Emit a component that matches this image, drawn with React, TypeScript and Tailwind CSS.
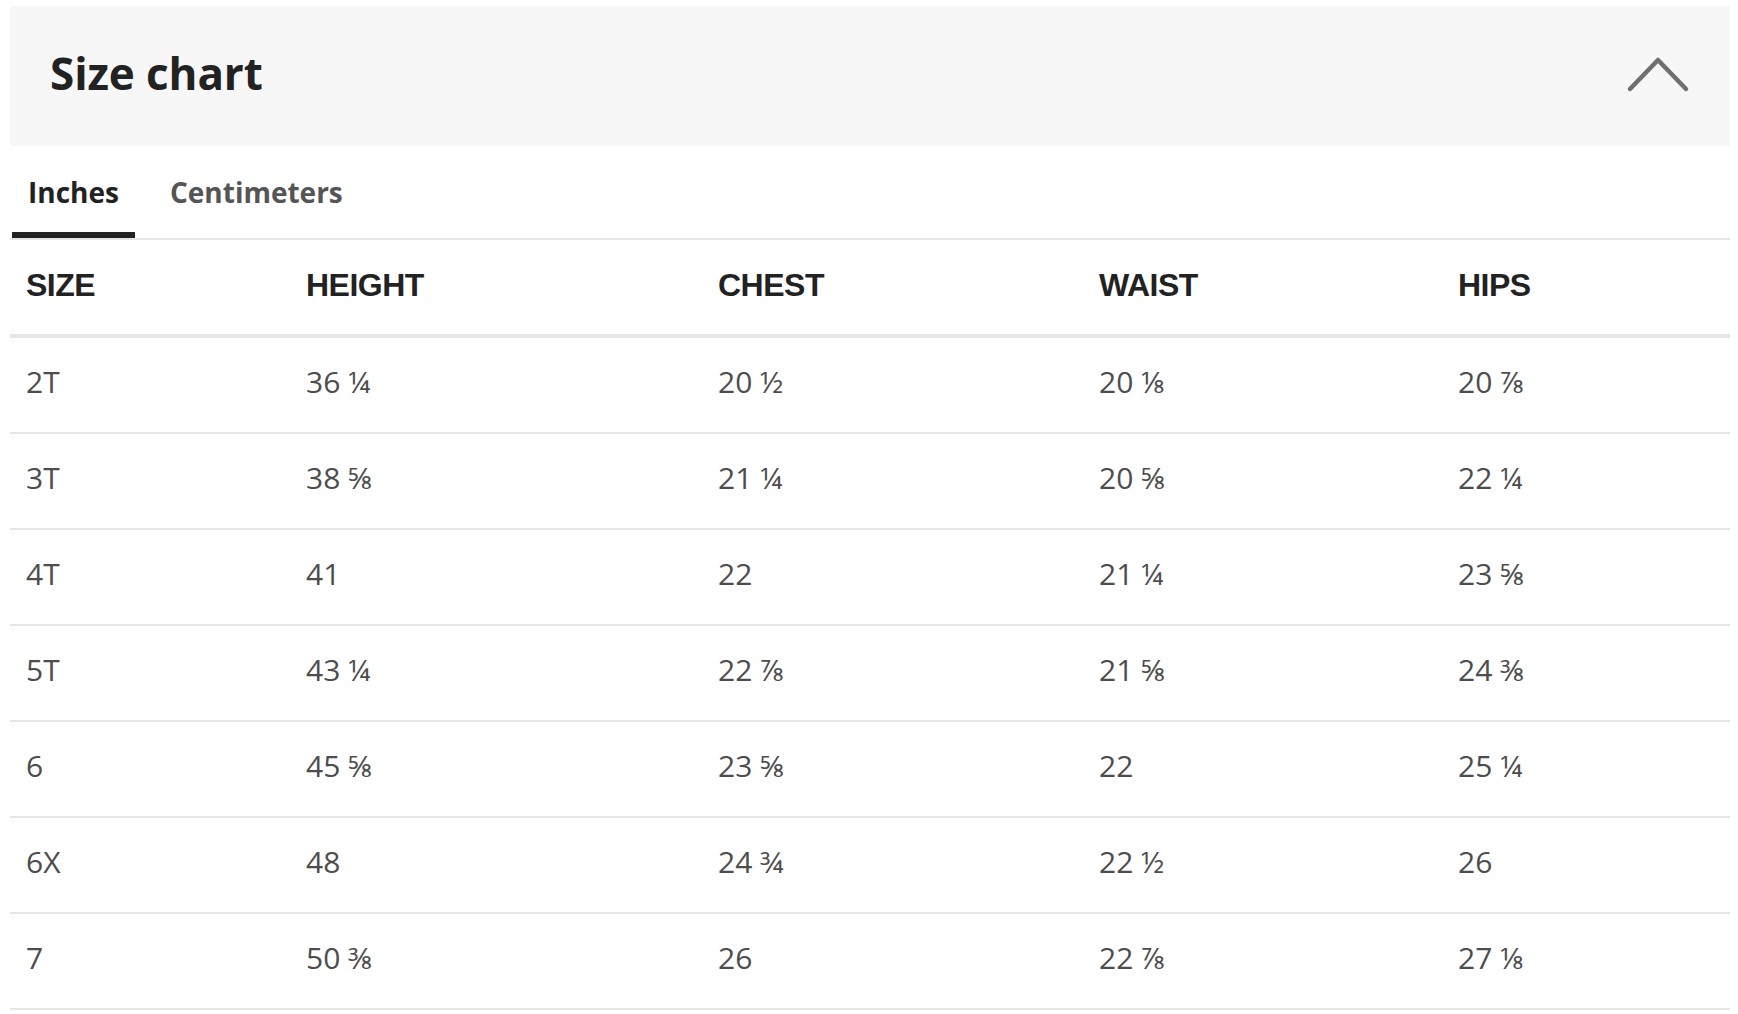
import React from "react";

const rows = [
  ["2T", "36 ¼", "20 ½", "20 ⅛", "20 ⅞"],
  ["3T", "38 ⅝", "21 ¼", "20 ⅝", "22 ¼"],
  ["4T", "41", "22", "21 ¼", "23 ⅝"],
  ["5T", "43 ¼", "22 ⅞", "21 ⅝", "24 ⅜"],
  ["6", "45 ⅝", "23 ⅝", "22", "25 ¼"],
  ["6X", "48", "24 ¾", "22 ½", "26"],
  ["7", "50 ⅜", "26", "22 ⅞", "27 ⅛"],
];

const headers = ["SIZE", "HEIGHT", "CHEST", "WAIST", "HIPS"];

const cols = "grid grid-cols-[280px_412px_381px_359px_1fr]";

const App = () => {
  return (
    <div className="min-h-screen bg-white pl-[10px] pr-[8px] pt-[6px] font-['Open_Sans',sans-serif]">
      <div className="flex h-[140px] items-center justify-between bg-[#f7f7f7] pl-10 pr-10">
        <h2 className="pb-[7px] text-[44px] font-bold text-[#222222] tracking-[-0.1px]">Size chart</h2>
        <svg width="64" height="38" viewBox="0 0 64 38" fill="none" className="mb-[4px]">
          <path d="M4 34 L32 5 L60 34" stroke="#6f6f6f" strokeWidth="4.5" strokeLinecap="round" strokeLinejoin="round" />
        </svg>
      </div>

      <div className="flex h-[94px] border-b-2 border-[#e5e5e5]">
        <button className="ml-[2px] flex h-[92px] items-center border-b-[6px] border-[#222222] px-4 pt-[6px] text-[28px] font-bold text-[#222222]">
          Inches
        </button>
        <button className="ml-[19px] flex h-[92px] items-center border-b-[6px] border-transparent px-4 pt-[6px] text-[28px] font-bold text-[#555555]">
          Centimeters
        </button>
      </div>

      <div className={`${cols} h-[98px] items-center border-b-4 border-[#e5e5e5] font-['Liberation_Sans',Arial,sans-serif]`}>
        {headers.map((h) => (
          <div key={h} className="px-4 pb-[4px] text-[32px] font-bold tracking-[-0.5px] text-[#222222]">
            {h}
          </div>
        ))}
      </div>

      {rows.map((r) => (
        <div key={r[0]} className={`${cols} h-[96px] items-center border-b-2 border-[#e5e5e5]`}>
          {r.map((c, i) => (
            <div key={i} className="px-4 pb-[7px] text-[30px] text-[#4d4d4d]">
              {c}
            </div>
          ))}
        </div>
      ))}
    </div>
  );
};

export default App;
